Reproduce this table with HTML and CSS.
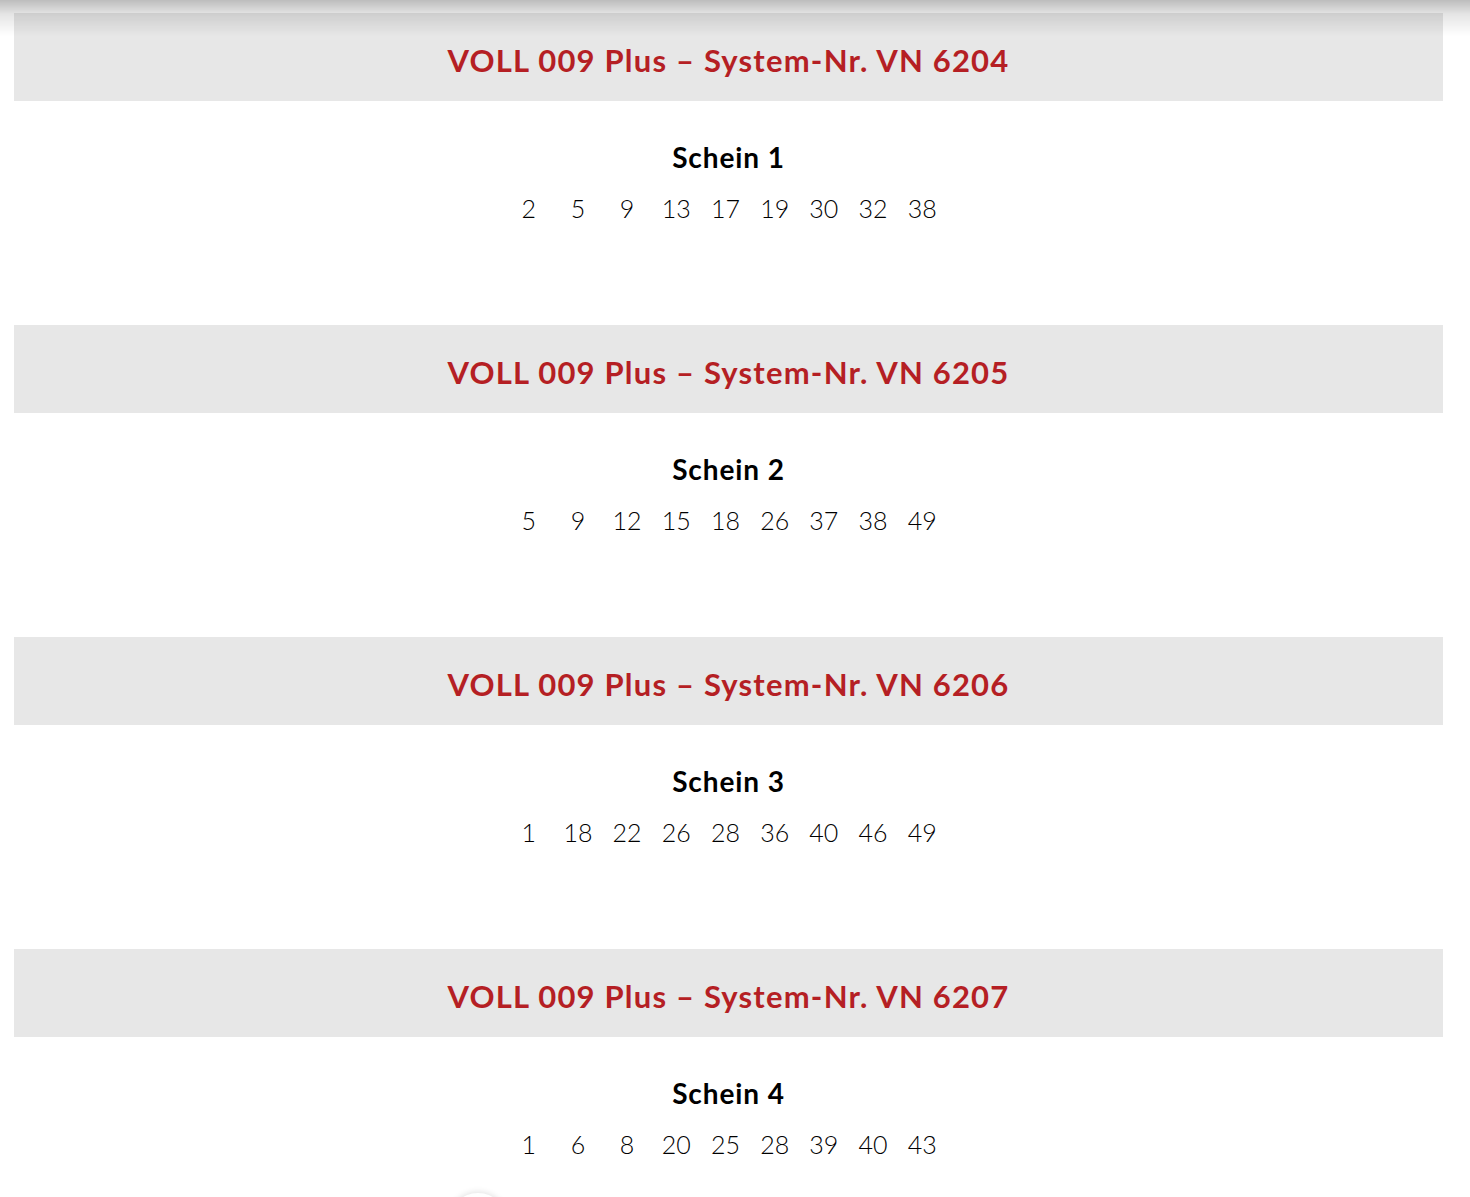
FILE: index.html
```html
<!DOCTYPE html>
<html lang="de">
<head>
<meta charset="utf-8">
<title>VOLL 009 Plus</title>
<link rel="stylesheet" href="styles.css">
</head>
<body>
<div class="top-shadow"></div>
<main class="list">
  <section class="draw">
    <div class="banner"><h2>VOLL 009 Plus – System-Nr. VN 6204</h2></div>
    <h3 class="schein">Schein 1</h3>
    <div class="numbers"><span>2</span><span>5</span><span>9</span><span>13</span><span>17</span><span>19</span><span>30</span><span>32</span><span>38</span></div>
  </section>
  <section class="draw">
    <div class="banner"><h2>VOLL 009 Plus – System-Nr. VN 6205</h2></div>
    <h3 class="schein">Schein 2</h3>
    <div class="numbers"><span>5</span><span>9</span><span>12</span><span>15</span><span>18</span><span>26</span><span>37</span><span>38</span><span>49</span></div>
  </section>
  <section class="draw">
    <div class="banner"><h2>VOLL 009 Plus – System-Nr. VN 6206</h2></div>
    <h3 class="schein">Schein 3</h3>
    <div class="numbers"><span>1</span><span>18</span><span>22</span><span>26</span><span>28</span><span>36</span><span>40</span><span>46</span><span>49</span></div>
  </section>
  <section class="draw">
    <div class="banner"><h2>VOLL 009 Plus – System-Nr. VN 6207</h2></div>
    <h3 class="schein">Schein 4</h3>
    <div class="numbers"><span>1</span><span>6</span><span>8</span><span>20</span><span>25</span><span>28</span><span>39</span><span>40</span><span>43</span></div>
  </section>
</main>
<div class="fab"></div>
</body>
</html>
```
FILE: styles.css
```css
html, body {
  margin: 0;
  background: #ffffff;
}
body {
  padding: 13px 27px 0 14px;
  font-family: Lato, "Open Sans", "Liberation Sans", sans-serif;
  color: #111;
  overflow: hidden;
}
.top-shadow {
  position: fixed;
  top: 0;
  left: 0;
  right: 0;
  height: 36px;
  background: linear-gradient(to bottom, rgba(0,0,0,0.26), rgba(0,0,0,0.1) 40%, rgba(0,0,0,0));
  pointer-events: none;
  z-index: 10;
}
.draw {
  display: flex;
  flex-direction: column;
  align-items: stretch;
  padding-bottom: 99px;
}
.banner {
  height: 88px;
  box-sizing: border-box;
  padding-top: 7px;
  background: #e7e7e7;
  text-align: center;
}
.banner h2 {
  margin: 0;
  font-size: 31px;
  line-height: 81px;
  font-weight: 700;
  color: #b51f24;
  letter-spacing: 1.2px;
}
.schein {
  margin: 36px 0 0;
  font-size: 28px;
  line-height: 40px;
  font-weight: 700;
  color: #000;
  text-align: center;
  letter-spacing: 0.9px;
}
.numbers {
  margin-top: 13px;
  display: flex;
  justify-content: center;
  padding-right: 6px;
  font-size: 25px;
  line-height: 36px;
  font-weight: 300;
  color: #000;
}
.numbers span {
  width: 49.2px;
  text-align: center;
}
.fab {
  position: fixed;
  left: 448px;
  top: 1193px;
  width: 60px;
  height: 60px;
  border-radius: 50%;
  background: #fff;
  box-shadow: 0 -1px 6px rgba(0,0,0,0.12);
}
```
